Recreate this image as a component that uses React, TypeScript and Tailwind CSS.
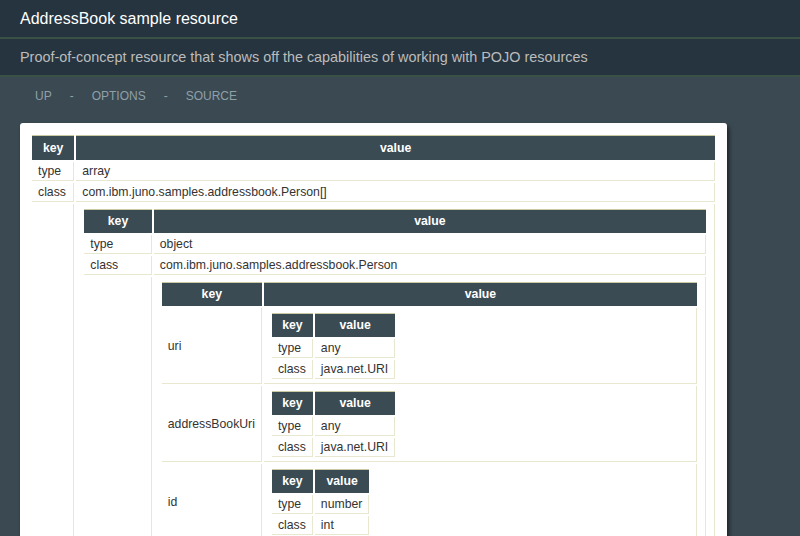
import React from "react";

type Row = { k: string; v: React.ReactNode; nested?: boolean };

const thBase =
  "bg-[#3b4b54] text-white font-bold text-center border-t border-[#c9c9a2] px-[6px] py-[5px] text-[12.25px]";
const td =
  "border-r border-b border-[#e8e8d0] px-[6px] py-[2px] text-[12.25px] leading-[14px] text-[#333] whitespace-nowrap";
const tdNested = "border-r border-b border-[#e8e8d0] px-[6px] pt-[3px] pb-[2px]";

function KV({ rows, full, top }: { rows: Row[]; full?: boolean; top?: boolean }) {
  const th = top ? `${thBase} leading-[14px]` : `${thBase} leading-[13px]`;
  return (
    <table className={full ? "w-full border-separate border-spacing-[2px]" : "border-separate border-spacing-[2px]"}>
      <thead>
        <tr>
          <th className={`${th} w-px whitespace-nowrap`}>key</th>
          <th className={th}>value</th>
        </tr>
      </thead>
      <tbody>
        {rows.map((r, i) => (
          <tr key={i}>
            <td className={td}>{r.k}</td>
            <td className={r.nested ? tdNested : td}>{r.v}</td>
          </tr>
        ))}
      </tbody>
    </table>
  );
}

const simple = (type: string, cls: string) => (
  <KV
    rows={[
      { k: "type", v: type },
      { k: "class", v: cls },
    ]}
  />
);

const addressProps: Row[] = [
  { k: "uri", v: simple("any", "java.net.URI"), nested: true },
  { k: "personUri", v: simple("any", "java.net.URI"), nested: true },
  { k: "id", v: simple("number", "int"), nested: true },
  { k: "street", v: simple("string", "java.lang.String"), nested: true },
  { k: "city", v: simple("string", "java.lang.String"), nested: true },
  { k: "state", v: simple("string", "java.lang.String"), nested: true },
  { k: "zip", v: simple("number", "int"), nested: true },
  { k: "isCurrent", v: simple("boolean", "boolean"), nested: true },
];

const personProps: Row[] = [
  { k: "uri", v: simple("any", "java.net.URI"), nested: true },
  { k: "addressBookUri", v: simple("any", "java.net.URI"), nested: true },
  { k: "id", v: simple("number", "int"), nested: true },
  { k: "name", v: simple("string", "java.lang.String"), nested: true },
  { k: "birthDate", v: simple("string", "java.util.Calendar"), nested: true },
  {
    k: "addresses",
    nested: true,
    v: (
      <KV
        rows={[
          { k: "type", v: "array" },
          { k: "class", v: "java.util.LinkedList<com.ibm.juno.samples.addressbook.Address>" },
          {
            k: "items",
            nested: true,
            v: (
              <KV
                rows={[
                  { k: "type", v: "object" },
                  { k: "class", v: "com.ibm.juno.samples.addressbook.Address" },
                  { k: "properties", nested: true, v: <KV rows={addressProps} /> },
                ]}
              />
            ),
          },
        ]}
      />
    ),
  },
  { k: "age", v: simple("number", "int"), nested: true },
];

export default function App() {
  return (
    <div className="min-h-[536px] bg-[#3b4952] font-['Liberation_Sans',Arial,sans-serif]">
      {/* Title */}
      <div className="h-[39px] bg-[#26343f] px-[20px] flex items-center text-[16px] text-white border-b-2 border-[#3a5246]">
        AddressBook sample resource
      </div>
      {/* Description */}
      <div className="h-[38px] bg-[#26343f] px-[20px] pt-[1px] flex items-center text-[14.4px] text-[#bcbcbc] border-b-2 border-[#3a5246]">
        Proof-of-concept resource that shows off the capabilities of working with POJO resources
      </div>

      <div className="px-[20px]">
        {/* Nav */}
        <div className="h-[36px] pl-[15px] pt-[2px] flex items-center gap-[18px] text-[12px] text-[#8fa0a8] uppercase">
          <span>UP</span>
          <span>-</span>
          <span>OPTIONS</span>
          <span>-</span>
          <span>SOURCE</span>
        </div>

        {/* Card */}
        <div className="mt-[10px] w-[707px] bg-white rounded-[3px] p-[10px] shadow-[2px_3px_4px_rgba(0,0,0,0.55)]">
          <KV
            full
            top
            rows={[
              { k: "type", v: "array" },
              { k: "class", v: "com.ibm.juno.samples.addressbook.Person[]" },
              {
                k: "items",
                nested: true,
                v: (
                  <KV
                    full
                    rows={[
                      { k: "type", v: "object" },
                      { k: "class", v: "com.ibm.juno.samples.addressbook.Person" },
                      { k: "properties", nested: true, v: <KV full rows={personProps} /> },
                    ]}
                  />
                ),
              },
            ]}
          />
        </div>
      </div>
    </div>
  );
}
